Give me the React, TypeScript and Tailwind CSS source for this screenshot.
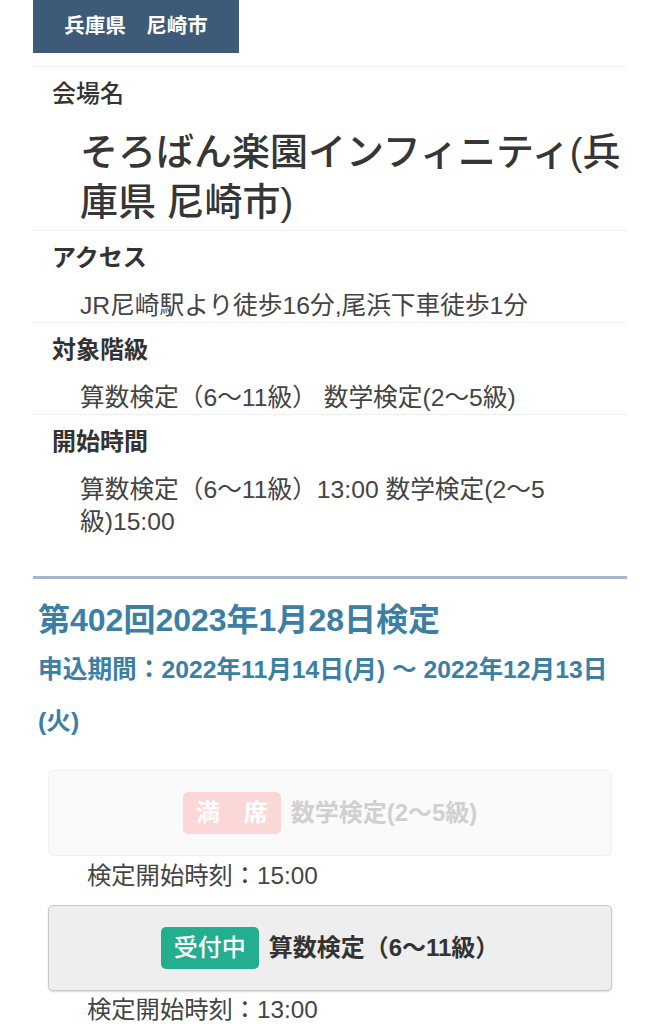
const FONT = {
  fontFamily: '"Liberation Sans", "Noto Sans CJK JP", sans-serif',
};

type Row = { label: string; value: string; labelWeight: string; big?: boolean };

const rows: Row[] = [
  {
    label: "会場名",
    value: "そろばん楽園インフィニティ(兵庫県 尼崎市)",
    labelWeight: "font-medium",
    big: true,
  },
  { label: "アクセス", value: "JR尼崎駅より徒歩16分,尾浜下車徒歩1分", labelWeight: "font-bold" },
  { label: "対象階級", value: "算数検定（6～11級） 数学検定(2～5級)", labelWeight: "font-bold" },
  {
    label: "開始時間",
    value: "算数検定（6～11級）13:00 数学検定(2～5級)15:00",
    labelWeight: "font-bold",
  },
];

function ExamButton({
  status,
  name,
  open,
}: {
  status: string;
  name: string;
  open: boolean;
}) {
  return (
    <div
      className={`mx-[15px] flex h-[86px] items-center justify-center gap-[10px] rounded-[5px] border ${
        open
          ? "border-[#c9c9c9] bg-[#eeeeee] shadow-[0_1px_2px_rgba(0,0,0,0.15)]"
          : "border-[#f1f1f1] bg-[#fafafa]"
      }`}
    >
      <span
        className={`flex h-[42px] items-center rounded-[5px] px-[13px] text-[24px] text-white ${
          open ? "bg-[#23ae90] font-medium" : "bg-[#fcd7d7] font-bold"
        }`}
      >
        {status}
      </span>
      <span
        className={`text-[24px] font-bold ${open ? "text-[#333333]" : "text-[#d0d0d0]"}`}
      >
        {name}
      </span>
    </div>
  );
}

export default function App() {
  return (
    <div className="min-h-[1024px] bg-white pl-[33px] pr-[36px]" style={FONT}>
      {/* Prefecture tab */}
      <div className="flex h-[53px] w-[206px] items-center justify-center bg-[#3e5a79] text-[20.5px] font-bold text-white">
        兵庫県　尼崎市
      </div>

      {/* Venue details */}
      <div className="mt-[13px]">
        {rows.map((row) => (
          <div key={row.label} className="border-t border-[#efefef] pt-[9px]">
            <div
              className={`pl-[19px] text-[24px] leading-[36px] text-[#333333] ${row.labelWeight}`}
            >
              {row.label}
            </div>
            {row.big ? (
              <div className="mt-[15px] pl-[47px] pb-[3px] text-[38px] font-medium leading-[50px] text-[#363636]">
                {row.value}
              </div>
            ) : (
              <div className="mt-[14px] pl-[47px] text-[24.7px] leading-[32px] text-[#444444]">
                {row.value}
              </div>
            )}
          </div>
        ))}
      </div>

      {/* Exam session */}
      <div className="mt-[38px] border-t-[3px] border-[#a5b7ca] pt-[17px] pl-[5px]">
        <h2 className="text-[32px] font-bold leading-[48px] text-[#3b80a4]">
          第402回2023年1月28日検定
        </h2>
        <p className="text-[24.7px] font-bold leading-[52px] text-[#3b80a4]">
          申込期間：2022年11月14日(月) 〜 2022年12月13日(火)
        </p>
      </div>

      <div className="mt-[22px]">
        <ExamButton status="満　席" name="数学検定(2～5級)" open={false} />
        <div className="pl-[54px] pt-[2px] text-[24.3px] leading-[36px] text-[#444444]">
          検定開始時刻：15:00
        </div>
        <div className="mt-[11px]">
          <ExamButton status="受付中" name="算数検定（6～11級）" open />
        </div>
        <div className="pl-[54px] pt-[1px] text-[24.3px] leading-[36px] text-[#444444]">
          検定開始時刻：13:00
        </div>
      </div>
    </div>
  );
}
